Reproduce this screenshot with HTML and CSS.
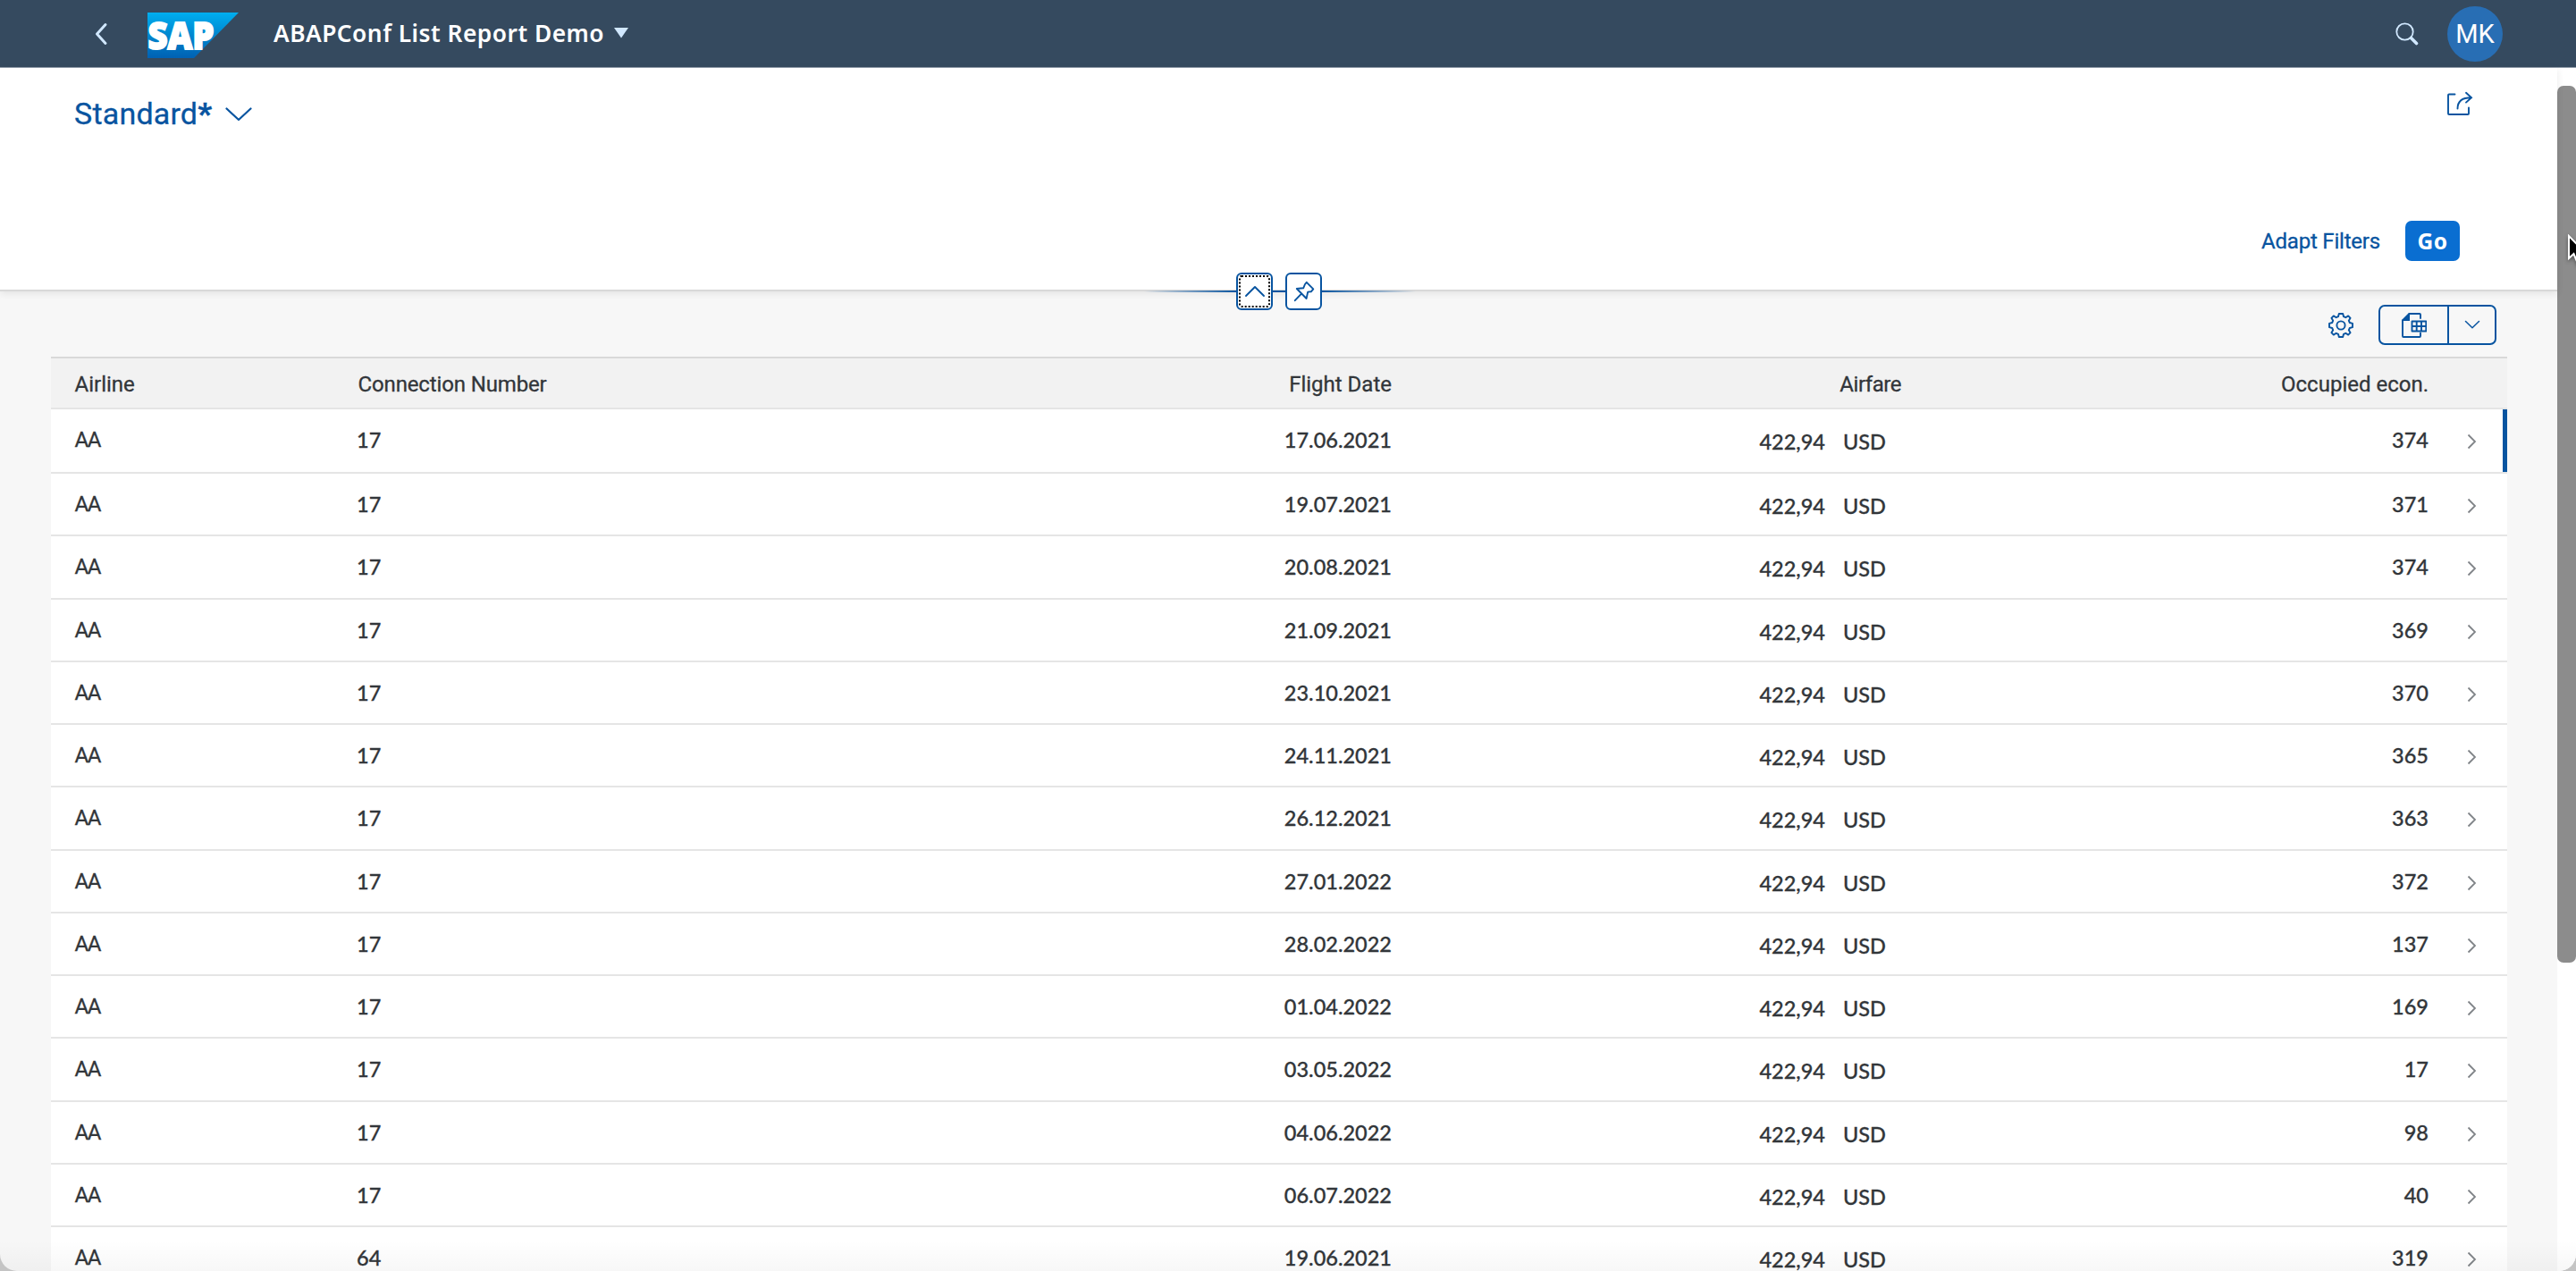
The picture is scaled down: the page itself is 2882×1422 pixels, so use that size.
FILE: index.html
```html
<!DOCTYPE html>
<html lang="en">
<head>
<meta charset="utf-8">
<title>ABAPConf List Report Demo</title>
<link rel="stylesheet" href="styles.css">
</head>
<body>
<div class="window">
  <header class="shell">
    <svg class="back" width="16" height="28" viewBox="0 0 16 28"><path d="M13 3.5 3.5 14 13 24.5"/></svg>
    <svg class="logo" width="102" height="51" viewBox="0 0 102 51">
      <defs><linearGradient id="sap" x1="0" y1="0" x2="0" y2="1"><stop offset="0" stop-color="#00aeef"/><stop offset=".5" stop-color="#0087cf"/><stop offset="1" stop-color="#0061b3"/></linearGradient></defs>
      <path d="M0 0H102L52 51H0Z" fill="url(#sap)"/>
      <text class="logo-text" x=".5" y="40.5" textLength="74" lengthAdjust="spacingAndGlyphs">SAP</text>
    </svg>
    <h1 class="title">ABAPConf List Report Demo</h1>
    <svg class="caret" width="16" height="12" viewBox="0 0 16 12"><path d="M0 0H16L8 11.5Z"/></svg>
    <svg class="search" width="26" height="26" viewBox="0 0 26 26"><circle cx="10.5" cy="10.5" r="9.2"/><path d="M17.5 17.5 23.5 23.5" class="handle"/></svg>
    <div class="avatar">MK</div>
  </header>

  <main class="content">
    <div class="page">
      <section class="filters">
        <div class="variant-row">
          <div class="variant"><span>Standard<b>*</b></span>
            <svg width="30" height="16" viewBox="0 0 30 16"><path d="M1.5 1.5 15 14 28.500 1.5"/></svg>
          </div>
          <svg class="share" width="30" height="28" viewBox="0 0 30 28"><path d="M9.500 3.500H3Q2 3.500 2 4.500V25Q2 26 3 26H24Q25 26 25 25V18.500M12.500 19.500C12.500 11.500 17 7.200 27.500 7.200M22 1.800 28 7.200 22 12.600"/></svg>
        </div>
        <div class="actions"><button class="link">Adapt Filters</button><button class="go">Go</button></div>
        <div class="handles">
          <span class="line left"></span>
          <button class="handle-btn focused"><svg width="24" height="14" viewBox="0 0 24 14"><path d="M2 12 12 2 22 12"/></svg></button>
          <span class="line mid"></span>
          <button class="handle-btn"><svg width="24" height="24" viewBox="0 0 24 24"><path d="M14.800 1.800 22.300 9.300 19.800 12.300 16.200 12.600 14.600 20 3.800 9 11.200 8.300 13 4ZM9 14.600 1.800 22.200"/></svg></button>
          <span class="line right"></span>
        </div>
      </section>

      <section class="toolbar">
        <svg class="gear" width="28" height="28" viewBox="0 0 28 28"><path d="M11.800 1H16.200L17 4.200 19.300 5.200 22.200 3.400 24.600 5.800 22.800 8.700 23.800 11 27 11.800V16.200L23.800 17 22.800 19.300 24.600 22.200 22.200 24.600 19.300 22.800 17 23.800 16.200 27H11.800L11 23.800 8.700 22.800 5.800 24.600 3.400 22.200 5.200 19.300 4.200 17 1 16.200V11.800L4.200 11 5.200 8.700 3.400 5.800 5.800 3.400 8.700 5.200 11 4.200Z"/><circle cx="14" cy="14" r="4.600"/></svg>
        <div class="split">
          <button class="export"><svg width="28" height="28" viewBox="0 0 28 28"><path d="M8.500 1H20Q21 1 21 2V6M1 8.500V26Q1 27 2 27H20Q21 27 21 26V22.500"/><path class="solid" d="M0 9V8L8 0H9V9Z"/><path d="M11.500 9.500H27.300V20.500H11.500ZM11.500 15H27.300M16.700 9.500V20.500M22 9.500V20.500"/></svg></button>
          <button class="more"><svg width="18" height="11" viewBox="0 0 18 11"><path d="M1.500 1.500 9 8.700 16.500 1.500"/></svg></button>
        </div>
      </section>

      <section class="table" id="table">
        <div class="row head"><span>Airline</span><span class="conn">Connection Number</span><span class="end">Flight Date</span><span class="fare">Airfare</span><span class="occ">Occupied econ.</span></div>
      </section>
    </div>
    <aside class="scroll"><div class="thumb"></div></aside>
  </main>
  <div class="fade"></div>
  <svg class="cursor" width="26" height="42" viewBox="0 0 26 42"><path d="M2 2V27L7.500 22 12 33 17 31 12.500 20.500H20Z"/></svg>
</div>
<script src="rows.js"></script>
</body>
</html>
```
FILE: rows.js
```js
const flights = [
  ["AA", "17", "17.06.2021", "374"],
  ["AA", "17", "19.07.2021", "371"],
  ["AA", "17", "20.08.2021", "374"],
  ["AA", "17", "21.09.2021", "369"],
  ["AA", "17", "23.10.2021", "370"],
  ["AA", "17", "24.11.2021", "365"],
  ["AA", "17", "26.12.2021", "363"],
  ["AA", "17", "27.01.2022", "372"],
  ["AA", "17", "28.02.2022", "137"],
  ["AA", "17", "01.04.2022", "169"],
  ["AA", "17", "03.05.2022", "17"],
  ["AA", "17", "04.06.2022", "98"],
  ["AA", "17", "06.07.2022", "40"],
  ["AA", "64", "19.06.2021", "319"]
];
document.getElementById("table").insertAdjacentHTML("beforeend", flights.map(([airline, conn, date, seats], i) =>
  `<div class="row item${i === 0 ? " navigated" : ""}"><span class="airline">${airline}</span><span class="num">${conn}</span><span class="num end">${date}</span><span class="num end amount">422,94</span><span class="num amount currency">USD</span><span class="num end">${seats}</span><svg class="nav" width="11" height="18" viewBox="0 0 11 18"><path d="M1.500 1.500 9 9 1.500 16.500"/></svg></div>`
).join(""));
```
FILE: styles.css
```css
* { box-sizing: border-box; }
body { margin: 0; background: #c4c4c4; font-family: Roboto, sans-serif; font-size: 24px; color: #32363a; }
button { font: inherit; background: none; border: 0; padding: 0; margin: 0; }
svg { display: block; flex: none; fill: none; }

.window { position: relative; width: 2882px; height: 1422px; overflow: hidden; background: #f7f7f7; border-radius: 0 0 19px 19px; display: flex; flex-direction: column; }

.shell { flex: none; height: 76px; background: #354a5f; border-bottom: 1px solid #8f9ba8; display: flex; align-items: center; padding: 0 82px 0 105px; }
.back path { stroke: #d1e8ff; stroke-width: 3; stroke-linecap: round; stroke-linejoin: round; }
.logo { margin: 3px 0 0 44px; }
.logo-text { font: 800 43px "Open Sans", sans-serif; fill: #fff; stroke: #fff; stroke-width: 2; }
.title { margin: 0 0 2px 39px; font: 600 26.3px/40px "Noto Sans", sans-serif; letter-spacing: .5px; width: 371px; color: #fff; white-space: nowrap; }
.caret { margin: 0 0 1px 10px; fill: #d1e8ff; }
.search { margin-left: auto; stroke: #d1e8ff; stroke-width: 1.8; }
.search .handle { stroke-width: 3.6; stroke-linecap: round; }
.avatar { width: 62px; height: 62px; margin-left: 32px; border-radius: 50%; background: #286eb4; color: #fff; font-size: 29px; line-height: 62px; text-align: center; }

.content { flex: 1; min-height: 0; display: flex; }
.page { width: 2861px; display: flex; flex-direction: column; }
.scroll { flex: 1; background: #fff; padding-top: 20px; }
.thumb { height: 981px; border-radius: 7px; background: #8c8c8c; }

.filters { flex: none; position: relative; height: 250px; background: #fff; border-bottom: 2px solid #d9d9d9; box-shadow: 0 2px 8px rgba(0,0,0,.09); padding: 26px 94px 0 83px; }
.variant-row { display: flex; justify-content: space-between; align-items: flex-start; height: 145px; }
.variant { display: flex; align-items: center; gap: 15px; padding-top: 1px; font-size: 34px; line-height: 48px; letter-spacing: .2px; color: #0854a0; -webkit-text-stroke: .3px #0854a0; }
.variant b { font-weight: 900; }
.variant svg { margin-top: 1px; stroke: #0854a0; stroke-width: 2.2; stroke-linecap: round; stroke-linejoin: round; }
.share { stroke: #0854a0; stroke-width: 1.900; stroke-linecap: round; }
.actions { display: flex; justify-content: flex-end; align-items: center; padding-right: 15px; gap: 28px; }
.link { color: #0854a0; letter-spacing: -.2px; line-height: 45px; padding-top: 2px; margin: -1px 0; -webkit-text-stroke: .3px #0854a0; }
.go { width: 61px; height: 45px; border-radius: 7px; background: #0a6ed1; color: #fff; font: 700 24.500px "Noto Sans", sans-serif; letter-spacing: .4px; }
.handles { position: absolute; left: 1280px; top: 229px; display: flex; align-items: center; }
.line { height: 2px; background: #0854a0; }
.left { width: 103px; background: linear-gradient(90deg, transparent, #0854a0); }
.mid { width: 14px; }
.right { width: 105px; background: linear-gradient(270deg, transparent, #0854a0); }
.handle-btn { width: 41px; height: 42px; border: 2px solid #0854a0; border-radius: 6px; background: #fff; display: flex; align-items: center; justify-content: center; }
.handle-btn svg { stroke: #0854a0; stroke-width: 1.900; stroke-linecap: round; stroke-linejoin: round; }
.focused { outline: 2px dotted #000; outline-offset: -5px; }

.toolbar { flex: none; height: 73px; padding: 15px 68px 0; display: flex; justify-content: flex-end; align-items: flex-start; gap: 28px; }
.gear { margin-top: 9px; stroke: #0854a0; stroke-width: 1.900; stroke-linejoin: round; }
.split { width: 132px; height: 45px; border: 2px solid #0854a0; border-radius: 7px; display: flex; }
.split button { display: flex; align-items: center; justify-content: center; }
.split svg { stroke: #0854a0; stroke-width: 1.900; stroke-linecap: round; stroke-linejoin: round; }
.split .solid { fill: #0854a0; stroke: none; }
.export { width: 77px; border-right: 2px solid #0854a0; }
.split .more { flex: 1; }
.split .more svg { stroke-width: 1.500; }

.table { width: 2748px; margin-left: 57px; -webkit-text-stroke: .3px #32363a; }
.row { display: grid; grid-template-columns: 342px 599px 559px 485px 86px 589px 1fr; height: 70.280px; line-height: 68px; background: #fff; border-bottom: 2px solid #e5e5e5; white-space: nowrap; }
.row > :first-child { padding-left: 26.500px; }
.head { height: 59px; line-height: 58px; background: #f2f2f2; border-top: 2px solid #d9d9d9; }
.conn { padding-left: 1.500px; letter-spacing: -.14px; }
.end { text-align: right; }
.fare { grid-column: 4 / 6; text-align: right; padding-right: 1px; letter-spacing: -.45px; }
.occ { text-align: right; }
.airline { letter-spacing: -1.500px; }
.num { font: 500 23.500px/68px Lato, sans-serif; }
.amount { padding-top: 2px; }
.currency { padding-left: 20px; }
.navigated { height: 72px; box-shadow: inset -5px 0 #0854a0; }
.nav { margin: 27px 0 0 43px; stroke: #808488; stroke-width: 1.800; }

.fade { position: absolute; left: 0; right: 0; bottom: 0; height: 34px; background: linear-gradient(transparent, rgba(0,0,0,.03)); }
.cursor { position: absolute; left: 2872px; top: 262px; filter: drop-shadow(0 2px 2px rgba(0,0,0,.4)); }
.cursor path { fill: #000; stroke: #fff; stroke-width: 2; }
```
